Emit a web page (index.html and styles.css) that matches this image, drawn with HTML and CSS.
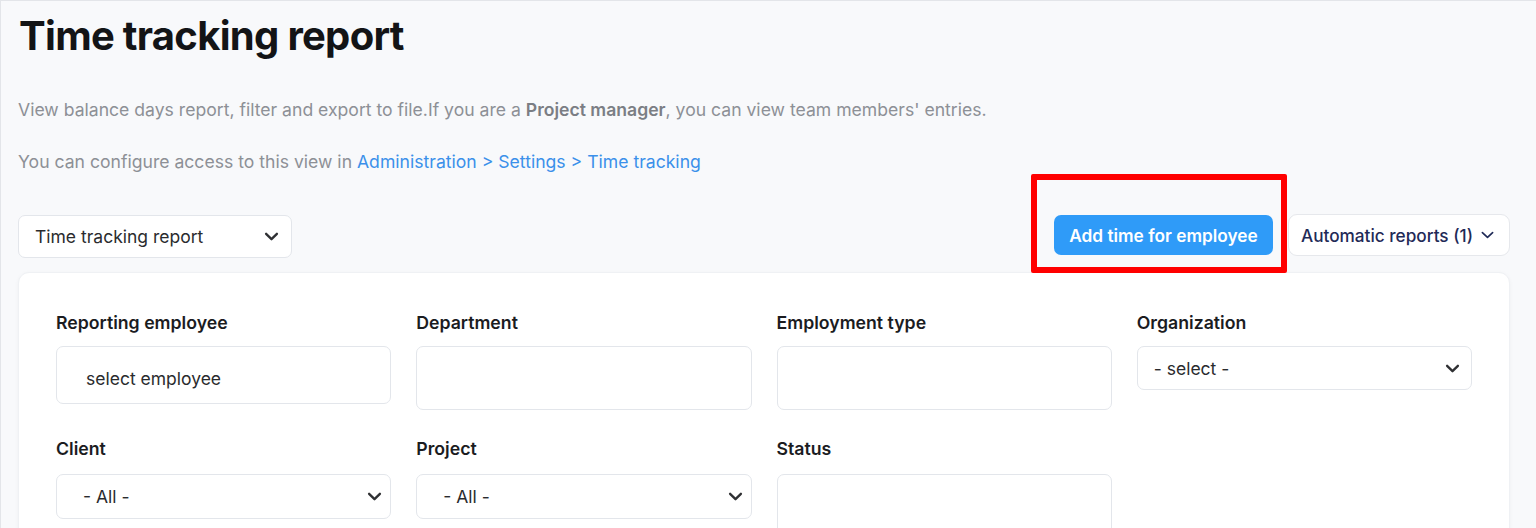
FILE: index.html
```html
<!DOCTYPE html>
<html lang="en">
<head>
  <meta charset="UTF-8" />
  <title>Time tracking report</title>
  <link rel="stylesheet" href="styles.css">
</head>
<body>

  <div class="page">
    <h1 class="page-title">Time tracking report</h1>

    <p class="intro">View balance days report, filter and export to file.If you are a <b>Project manager</b>, you can view team members' entries.</p>
    <p class="intro intro-access">You can configure access to this view in <a href="#">Administration &gt; Settings &gt; Time tracking</a></p>

    <!-- report picker + actions -->
    <div class="toolbar">
      <div class="select select-report">
        <span>Time tracking report</span>
        <svg class="chev" viewBox="0 0 16 10"><path d="M2 2l6 6 6-6"/></svg>
      </div>

      <div class="actions">
        <div class="btn-wrap">
          <button class="btn btn-primary">Add time for employee</button>
          <span class="highlight"></span>
        </div>
        <button class="btn btn-auto">
          Automatic reports (1)
          <svg class="chev-sm" viewBox="0 0 14 8"><path d="M1.5 1.5l5.5 5 5.5-5"/></svg>
        </button>
      </div>
    </div>

    <!-- filters -->
    <div class="card">
      <div class="filters">
        <div class="field">
          <label>Reporting employee</label>
          <div class="input input-employee">select employee</div>
        </div>
        <div class="field">
          <label>Department</label>
          <div class="input input-tall"></div>
        </div>
        <div class="field">
          <label>Employment type</label>
          <div class="input input-tall"></div>
        </div>
        <div class="field">
          <label>Organization</label>
          <div class="select select-org">
            <span>- select -</span>
            <svg class="chev" viewBox="0 0 16 10"><path d="M2 2l6 6 6-6"/></svg>
          </div>
        </div>

        <div class="field">
          <label>Client</label>
          <div class="select select-all">
            <span>- All -</span>
            <svg class="chev" viewBox="0 0 16 10"><path d="M2 2l6 6 6-6"/></svg>
          </div>
        </div>
        <div class="field">
          <label>Project</label>
          <div class="select select-all">
            <span>- All -</span>
            <svg class="chev" viewBox="0 0 16 10"><path d="M2 2l6 6 6-6"/></svg>
          </div>
        </div>
        <div class="field">
          <label>Status</label>
          <div class="input input-status"></div>
        </div>
      </div>
    </div>
  </div>

</body>
</html>
```

FILE: styles.css
```css
/* page */
html, body {
  margin: 0;
  height: 100%;
}
body {
  font-family: Inter, "Noto Sans", sans-serif;
  background: #f8f9fb;
  color: #1b1c1f;
  overflow: hidden;
}
.page {
  height: 100%;
  box-sizing: border-box;
  border-top: 1px solid #e3e5e9;
  border-left: 1px solid #e3e5e9;
  padding: 0 26px 0 17px;
}

.page-title {
  margin: 11px 0 0 1px;
  font-size: 40px;
  line-height: 48px;
  font-weight: 700;
  letter-spacing: -0.7px;
  color: #131416;
}

.intro {
  margin: 38px 0 0;
  font-size: 17.6px;
  line-height: 24px;
  color: #8d9096;
}
.intro b {
  font-weight: 600;
  color: #7b7e84;
}
.intro-access {
  margin-top: 28px;
}
.intro a {
  color: #3b90ea;
  text-decoration: none;
}

/* toolbar */
.toolbar {
  display: flex;
  justify-content: space-between;
  align-items: flex-start;
  margin-top: 40px;
}
.actions {
  display: flex;
  align-items: center;
  gap: 15px;
}
.btn-wrap {
  position: relative;
}

.select {
  display: flex;
  align-items: center;
  justify-content: space-between;
  box-sizing: border-box;
  background: #fff;
  border: 1px solid #e3e6eb;
  border-radius: 7px;
  font-size: 17.5px;
  color: #2a2b2e;
}
.select .chev {
  width: 15px;
  height: 9px;
  fill: none;
  stroke: #2f3033;
  stroke-width: 2.6;
  stroke-linecap: round;
  stroke-linejoin: round;
}
.select-report {
  width: 274px;
  height: 43px;
  margin-top: 1px;
  padding: 0 12px 0 16px;
}

.btn {
  font-family: inherit;
  cursor: pointer;
  border-radius: 7px;
  display: flex;
  align-items: center;
  box-sizing: border-box;
  white-space: nowrap;
}
.btn-primary {
  height: 40px;
  width: 219px;
  justify-content: center;
  border: none;
  background: #2f9bf8;
  color: #fff;
  font-size: 17.3px;
  font-weight: 600;
}
.btn-auto {
  height: 42px;
  width: 222px;
  padding: 0 14px 0 12px;
  gap: 8px;
  background: #fff;
  border: 1px solid #e6e8ec;
  border-radius: 9px;
  color: #1f2a57;
  font-size: 17.2px;
  font-weight: 500;
}
.chev-sm {
  flex: none;
  width: 13px;
  height: 8px;
  fill: none;
  stroke: #1f2a57;
  stroke-width: 1.8;
  stroke-linecap: round;
  stroke-linejoin: round;
}

/* red annotation frame over the button */
.highlight {
  position: absolute;
  left: -23px;
  top: -41px;
  width: 256px;
  height: 99px;
  box-sizing: border-box;
  border: 6px solid #ff0000;
  border-radius: 2px;
  pointer-events: none;
}

/* filter card */
.card {
  margin-top: 14px;
  background: #fff;
  border: 1px solid #eff1f4;
  border-radius: 11px;
  box-shadow: 0 1px 4px rgba(30, 40, 60, 0.04);
  padding: 38px 37px 0 37px;
  height: 400px;
}
.filters {
  display: grid;
  grid-template-columns: repeat(4, 1fr);
  column-gap: 25px;
  row-gap: 27px;
  align-items: start;
}
.field label {
  display: block;
  font-size: 17.7px;
  line-height: 24px;
  font-weight: 600;
  color: #1b1c1f;
  margin-bottom: 11px;
}
.input {
  box-sizing: border-box;
  background: #fff;
  border: 1px solid #e3e6eb;
  border-radius: 7px;
  font-size: 17.5px;
  color: #2a2b2e;
}
.input-employee {
  height: 58px;
  line-height: 63px;
  padding-left: 29px;
}
.input-tall {
  height: 64px;
}
.input-status {
  height: 70px;
}
.select-org {
  height: 44px;
  padding: 0 11px 0 16px;
}
.select-all {
  height: 45px;
  padding: 0 8px 0 26px;
}
.field:nth-child(n+5) label {
  margin-bottom: 13px;
}
```
